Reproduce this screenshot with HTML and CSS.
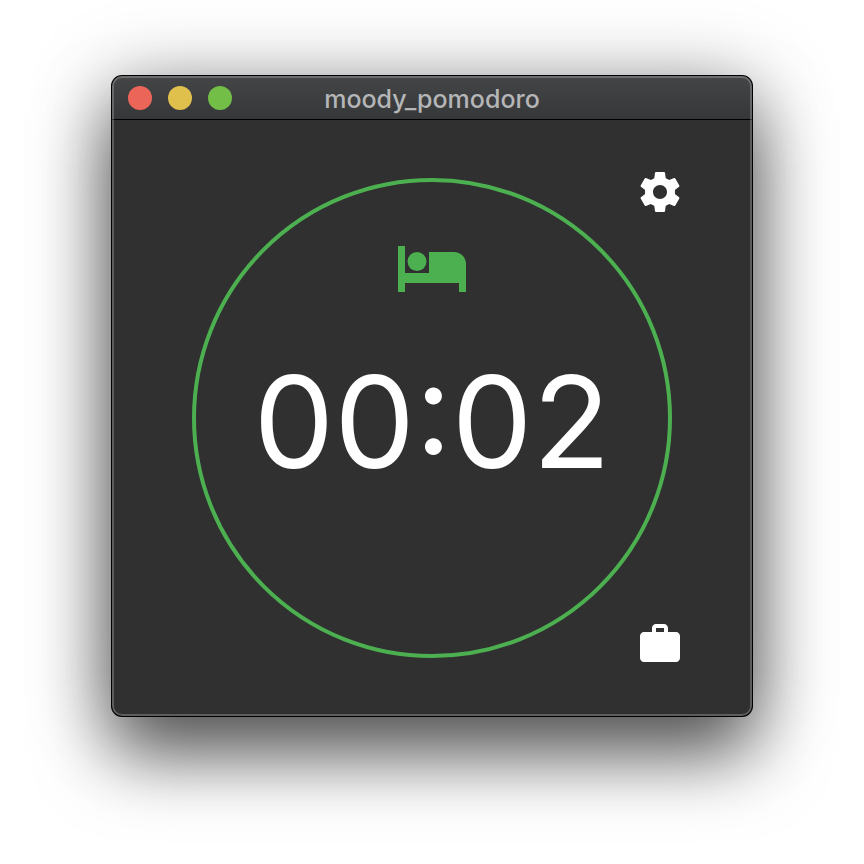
FILE: index.html
```html
<!DOCTYPE html>
<html lang="en">
<head>
<meta charset="utf-8">
<title>moody_pomodoro</title>
<link rel="stylesheet" href="styles.css">
</head>
<body>
<main class="window">
  <header class="titlebar">
    <div class="controls">
      <button class="dot close" aria-label="Close"></button>
      <button class="dot minimize" aria-label="Minimize"></button>
      <button class="dot zoom" aria-label="Zoom"></button>
    </div>
    <h1 class="title">moody_pomodoro</h1>
  </header>
  <section class="content">
    <div class="dial">
      <svg class="bed" viewBox="0 0 68 46" aria-hidden="true"><path d="M0 0h7v27h24V6h25a12 12 0 0 1 12 12v28h-7v-9H7v9H0z"/><circle cx="19" cy="15.500" r="9.500"/></svg>
      <time class="time">00:02</time>
    </div>
    <nav class="actions">
      <button class="action" aria-label="Settings"><svg viewBox="0 0 24 24"><path d="M19.430 12.980c.04-.32.070-.64.070-.98s-.03-.66-.07-.98l2.110-1.650c.19-.15.240-.42.120-.64l-2-3.460c-.12-.22-.39-.3-.61-.22l-2.490 1c-.52-.4-1.080-.73-1.690-.98l-.38-2.650C14.460 2.180 14.250 2 14 2h-4c-.25 0-.46.180-.49.420l-.38 2.650c-.61.250-1.170.590-1.690.980l-2.490-1c-.23-.09-.49 0-.61.220l-2 3.460c-.13.220-.07.490.120.640l2.110 1.650c-.04.320-.07.650-.07.980s.03.660.070.980l-2.110 1.650c-.19.150-.24.420-.12.640l2 3.460c.12.220.390.300.610.220l2.490-1c.52.400 1.080.730 1.690.980l.38 2.650c.03.240.240.420.490.420h4c.25 0 .46-.18.490-.42l.38-2.650c.61-.25 1.170-.59 1.690-.98l2.490 1c.23.090.490 0 .610-.22l2-3.460c.12-.22.070-.49-.12-.64l-2.110-1.650zM12 15.500c-1.930 0-3.500-1.570-3.500-3.500s1.570-3.500 3.500-3.500 3.500 1.570 3.500 3.500-1.570 3.500-3.500 3.500z"/></svg></button>
      <button class="action" aria-label="Work"><svg viewBox="0 0 24 24"><path d="M20 6h-4V4c0-1.110-.89-2-2-2h-4c-1.110 0-2 .89-2 2v2H4c-1.110 0-1.990.89-1.990 2L2 19c0 1.110.89 2 2 2h16c1.110 0 2-.89 2-2V8c0-1.110-.89-2-2-2zm-6 0h-4V4h4v2z"/></svg></button>
    </nav>
  </section>
</main>
</body>
</html>
```
FILE: styles.css
```css
* { box-sizing: border-box; }
body {
  margin: 0;
  min-height: 100vh;
  padding: 76px 112px 148px;
  display: flex;
  background: #fff;
  font-family: Inter, sans-serif;
}
button { border: 0; padding: 0; background: none; }
svg { display: block; fill: currentColor; }
.window {
  flex: 1;
  display: flex;
  flex-direction: column;
  border-radius: 10px;
  overflow: hidden;
  position: relative;
  background: #303030;
  box-shadow: 0 0 0 1px #000, 0 40px 72px rgba(0, 0, 0, .56), 0 8px 80px rgba(0, 0, 0, .36);
}
.window::after {
  content: "";
  position: absolute;
  inset: 0;
  border: 2px solid rgba(255, 255, 255, .22);
  border-radius: 10px;
  pointer-events: none;
}
.titlebar {
  display: grid;
  grid-template-columns: 1fr auto 1fr;
  align-items: center;
  height: 44px;
  padding: 0 16px;
  background: linear-gradient(#444547, #363739);
  border-bottom: 1px solid #000;
}
.controls { display: flex; gap: 16px; }
.dot { width: 24px; height: 24px; border-radius: 50%; }
.close { background: #ec6559; }
.minimize { background: #e0c04c; }
.zoom { background: #72be47; }
.title {
  margin: 0;
  padding-top: 2px;
  font-size: 25px;
  line-height: 32px;
  font-weight: 500;
  color: #b5b6b7;
}
.content {
  flex: 1;
  display: grid;
}
.dial, .actions { grid-area: 1 / 1; }
.dial {
  place-self: center;
  width: 480px;
  height: 480px;
  border: 4px solid #4caf50;
  border-radius: 50%;
  display: flex;
  flex-direction: column;
  align-items: center;
  padding-top: 64px;
}
.bed { width: 68px; height: 46px; color: #4caf50; }
.time { margin-top: 50px; font-size: 128px; line-height: 160px; color: #fff; }
.actions {
  justify-self: end;
  display: flex;
  flex-direction: column;
  justify-content: space-between;
  padding: 32px 52px;
}
.action { width: 80px; height: 80px; display: grid; place-items: center; color: #fff; }
.action svg { width: 48px; height: 48px; }
```
